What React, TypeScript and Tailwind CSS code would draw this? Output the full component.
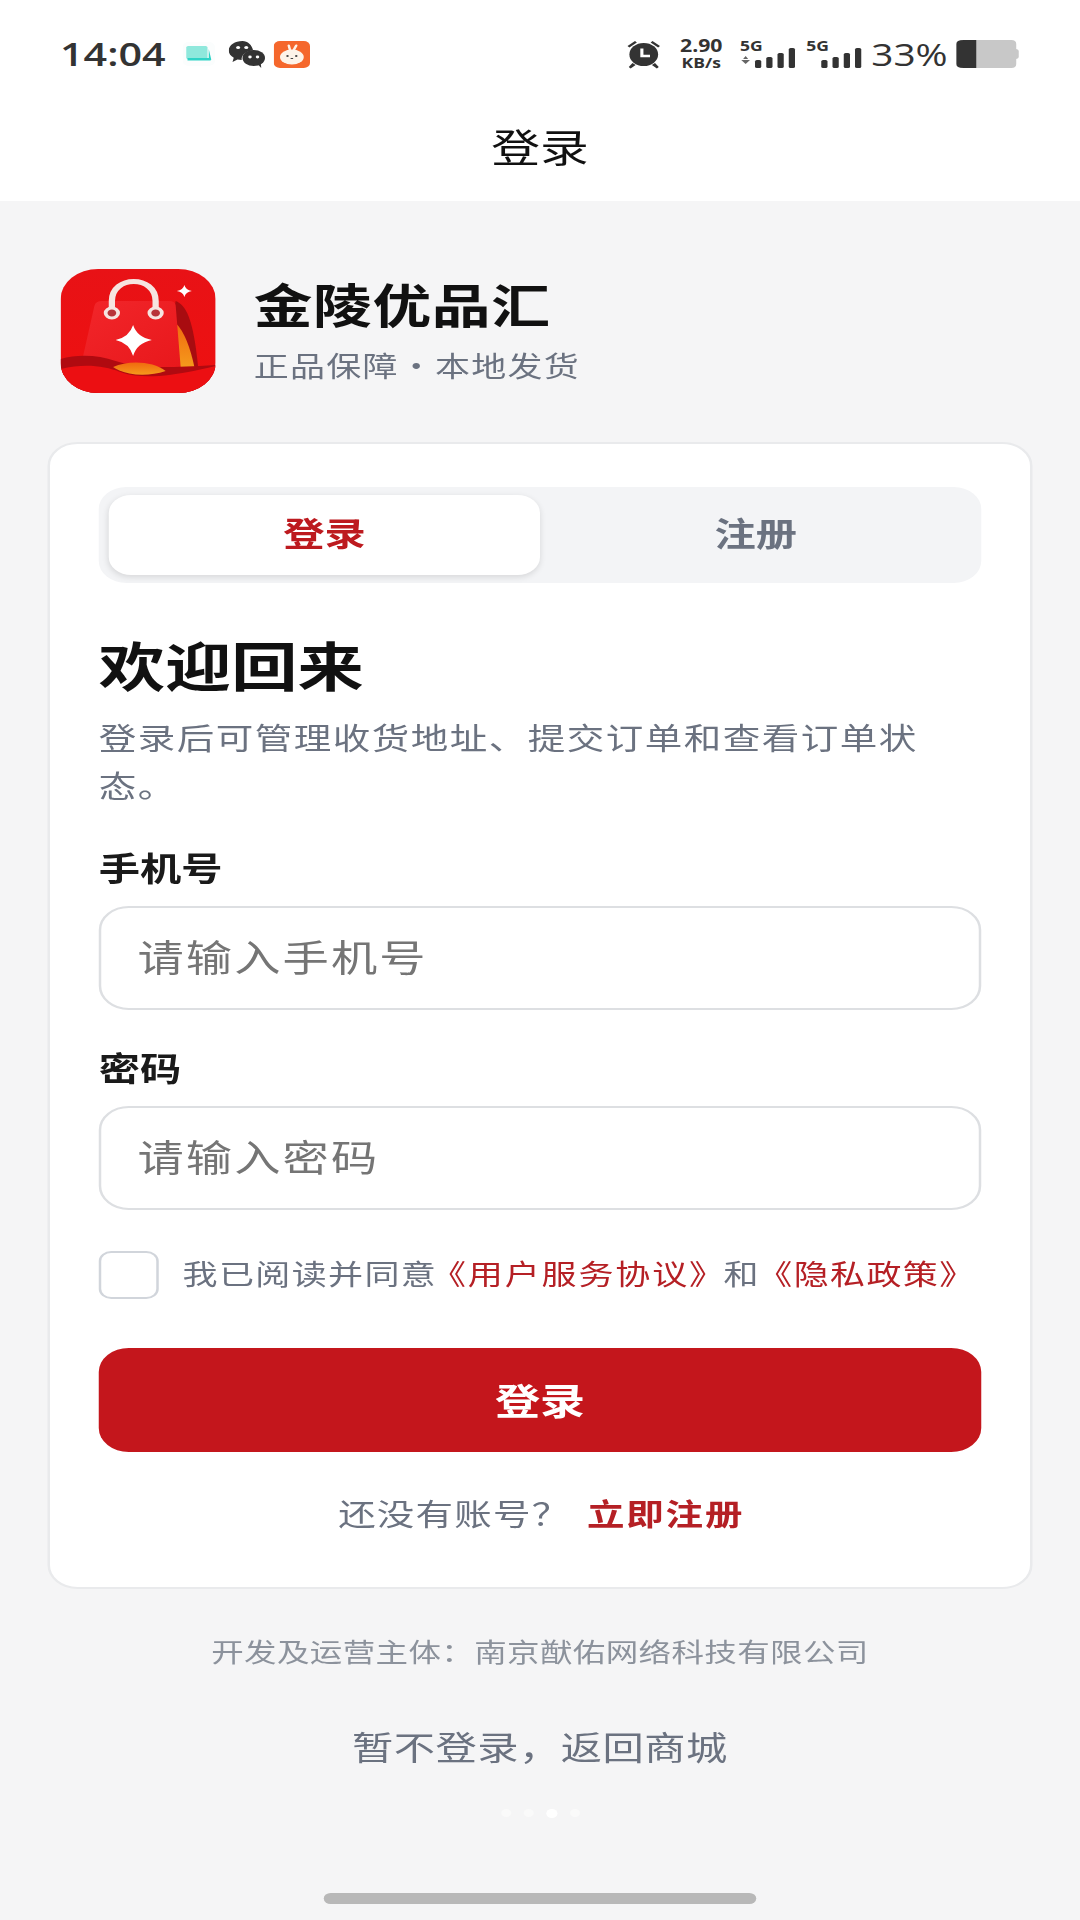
const cjk = "font-['Noto_Sans_CJK_SC','Noto_Sans',sans-serif]";

function Signal({ arrow }: { arrow?: boolean }) {
  return (
    <div className="relative w-[45px] h-[30px]">
      <span className="absolute left-0 top-[-1px] text-[14px] leading-[16px] font-bold text-[#333] font-['Open_Sans',sans-serif]">5G</span>
      <svg className="absolute left-0 top-0" width="45" height="30" viewBox="0 0 45 30" fill="#333">
        {arrow && <path d="M1 21h7l-3.500 4z M2.500 20l2-3 2 3z" opacity="0.75" />}
        <rect x="12" y="21" width="5" height="8" rx="1.500" />
        <rect x="21" y="18" width="5" height="11" rx="1.500" />
        <rect x="30" y="14" width="5" height="15" rx="1.500" />
        <rect x="39" y="9" width="5" height="20" rx="1.500" />
      </svg>
    </div>
  );
}

function Logo() {
  return (
    <svg width="125" height="124" viewBox="0 0 124 124" className="shrink-0">
      <defs>
        <clipPath id="lc"><rect width="124" height="124" rx="30" /></clipPath>
        <linearGradient id="bg" x1="0" y1="0" x2="0" y2="1">
          <stop offset="0" stopColor="#e81216" />
          <stop offset="1" stopColor="#ee1010" />
        </linearGradient>
        <linearGradient id="bag" x1="0" y1="0" x2="1" y2="1">
          <stop offset="0" stopColor="#f2262a" />
          <stop offset="1" stopColor="#e8181c" />
        </linearGradient>
        <linearGradient id="or" x1="0" y1="0" x2="0" y2="1">
          <stop offset="0" stopColor="#f0690f" />
          <stop offset="1" stopColor="#f59a1c" />
        </linearGradient>
      </defs>
      <g clipPath="url(#lc)">
        <rect width="124" height="124" fill="url(#bg)" />
        <path d="M92 32 C100 36 106 48 110 98 L84 98Z" fill="#a80c10" />
        <path d="M92 54 C99 62 104 80 107 98 L90 98Z" fill="url(#or)" />
        <path d="M33 32 L87 32 Q91 32 92 36 L96 98 L16 98 L27 37 Q28 32 33 32Z" fill="url(#bag)" />
        <path d="M0 90 C14 85 30 86 44 92 C58 98 74 100 124 96 L124 124 L0 124Z" fill="#b00a10" />
        <path d="M42 98 C54 91 74 92 84 102 C70 108 52 107 42 98Z" fill="url(#or)" />
        <path d="M0 100 C20 94 36 97 50 104 C66 110 88 108 124 97 L124 124 L0 124Z" fill="#ec0f12" />
        <path d="M41 44 L41 32 C41 6 76 6 76 32 L76 44" fill="none" stroke="#f6e4e0" strokeWidth="5" />
        <circle cx="41" cy="44" r="5" fill="#b8343a" stroke="#f6e4e0" strokeWidth="3" />
        <circle cx="76" cy="44" r="5" fill="#b8343a" stroke="#f6e4e0" strokeWidth="3" />
        <path d="M58 56 Q61 68 73 71 Q61 74 58 87 Q55 74 44 71 Q55 68 58 56Z" fill="#fff" />
        <path d="M99 16 Q100 21 105 22 Q100 23 99 28 Q98 23 93 22 Q98 21 99 16Z" fill="#fff" />
      </g>
    </svg>
  );
}

function StatusBar() {
  return (
    <div className="h-[88px] pt-[20px] px-[48px] flex items-center justify-between text-[#333]">
      <div className="flex items-center">
        <span className="text-[33px] leading-[40px] font-semibold font-['Open_Sans',sans-serif] w-[98px]">14:04</span>
        <svg width="26" height="26" viewBox="0 0 26 26">
          <rect x="0" y="1" width="26" height="24" rx="5" fill="#fbfdfd" />
          <rect x="3" y="5" width="17" height="13" rx="1.500" fill="#8fe8dc" />
          <path d="M4 17h17v-9l2 10.500q0 1-1 1H4Z" fill="#2fd3c6" />
        </svg>
        <svg width="29" height="27" viewBox="0 0 29 27" className="ml-[11px]" fill="#333">
          <path d="M11 0C5 0 0 4 0 9.500c0 3 1.600 5.600 4 7.300l-1 4.200 4-2.500c1 .3 2.200.5 3.300.5C10 13.500 14 10 19.500 9.500 18.600 4 15.200 0 11 0Z" />
          <ellipse cx="20" cy="17" rx="9" ry="8" />
          <path d="M23 23l3 4-.5-6Z" />
          <circle cx="7.500" cy="6.500" r="1.600" fill="#fff" />
          <circle cx="14" cy="6.500" r="1.600" fill="#fff" />
          <circle cx="17" cy="16" r="1.400" fill="#fff" />
          <circle cx="23" cy="16" r="1.400" fill="#fff" />
        </svg>
        <svg width="29" height="27" viewBox="0 0 29 27" className="ml-[7px]">
          <rect width="29" height="27" rx="5" fill="#f5672c" />
          <ellipse cx="14.500" cy="16" rx="9.500" ry="7.500" fill="#fdf3e8" />
          <path d="M13 9l-1-4.500M16 9l2-4.500" stroke="#fdf3e8" strokeWidth="2" strokeLinecap="round" />
          <circle cx="11" cy="15" r="1" fill="#444" />
          <circle cx="18" cy="15" r="1" fill="#444" />
          <path d="M13.500 17.500h2" stroke="#444" strokeWidth="1" />
        </svg>
      </div>
      <div className="flex items-center">
        <svg width="30" height="30" viewBox="0 0 30 30" fill="#333">
          <circle cx="15" cy="15.500" r="11.500" />
          <path d="M2 7l6-5 1.500 1.500-6 5ZM28 7l-6-5-1.500 1.500 6 5Z" />
          <path d="M6 24l-3 4 1.500 1.500 4-3.500ZM24 24l3 4-1.500 1.500-4-3.500Z" />
          <path d="M13.500 9.500v7.500h6.500" fill="none" stroke="#fff" strokeWidth="2.500" />
        </svg>
        <div className="ml-[12px] w-[38px] flex flex-col items-center gap-[1px] font-['Open_Sans',sans-serif] font-bold text-[#333]">
          <span className="text-[17px] leading-[16px]">2.90</span>
          <span className="text-[14px] leading-[15px]">KB/s</span>
        </div>
        <div className="ml-[12px]"><Signal arrow /></div>
        <div className="ml-[8px]"><Signal /></div>
        <span className="ml-[7px] w-[60px] text-[31px] leading-[40px] font-['Open_Sans',sans-serif]">33%</span>
        <svg width="51" height="28" viewBox="0 0 51 28" className="ml-[8px]">
          <path d="M6 0h38q4 0 4 4v5q2 .5 2 2v6q0 1.500-2 2v5q0 4-4 4H6q-6 0-6-4V4q0-4 6-4Z" fill="#c8c8c8" />
          <path d="M6 0h10v28H6q-6 0-6-4V4q0-4 6-4Z" fill="#333" />
        </svg>
      </div>
    </div>
  );
}

function Field({ label, placeholder, top }: { label: string; placeholder: string; top: string }) {
  return (
    <div className={top}>
      <div className="text-[33px] leading-[44px] font-bold text-[#1a1a1a]">{label}</div>
      <input
        readOnly
        placeholder={placeholder}
        className="mt-[17px] block w-full h-[104px] pl-[29px] pr-[32px] pb-[4px] rounded-[24px] border-2 border-[#dddfe2] bg-white text-[37px] tracking-[1.700px] outline-none placeholder:text-[#757575]"
      />
    </div>
  );
}

export default function App() {
  return (
    <div className="w-[1080px] h-[1920px] overflow-hidden bg-[#f5f5f6]">
      <div className={`w-[864px] h-[1920px] origin-top-left scale-x-125 flex flex-col ${cjk}`}>
        <header className="h-[201px] bg-white shrink-0">
          <StatusBar />
          <div className="h-[113px] pt-[2px] flex items-center justify-center text-[39px] text-[#111]">登录</div>
        </header>

        <div className="mt-[68px] px-[48px] flex items-center gap-[30px]">
          <Logo />
          <div className="mb-[4px]">
            <div className="text-[47px] leading-[60px] font-bold text-[#111] tracking-[0.5px]">金陵优品汇</div>
            <div className="mt-[12px] text-[28px] leading-[40px] text-[#6b7280] tracking-[1px] flex">
              <span>正品保障</span><span>·</span><span>本地发货</span>
            </div>
          </div>
        </div>

        <section className="mt-[49px] mx-[38px] h-[1147px] px-[39px] pt-[43px] rounded-[24px] border-2 border-[#e9eaec] bg-white">
          <div className="h-[96px] p-[8px] rounded-[22px] bg-[#f3f4f6] grid grid-cols-2">
            <div className="rounded-[18px] bg-white shadow-[0_2px_6px_rgba(0,0,0,0.12)] flex items-center justify-center pb-[4px] text-[33px] font-bold text-[#bd1a1f]">登录</div>
            <div className="flex items-center justify-center pb-[4px] text-[33px] font-bold text-[#6b7280]">注册</div>
          </div>

          <h1 className="mt-[45px] text-[53px] leading-[72px] font-bold text-[#111]">欢迎回来</h1>
          <p className="mt-[12px] text-[30px] leading-[48px] text-[#6b7280] tracking-[1.200px]">登录后可管理收货地址、提交订单和查看订单状态。</p>

          <Field top="mt-[37px]" label="手机号" placeholder="请输入手机号" />
          <Field top="mt-[35px]" label="密码" placeholder="请输入密码" />

          <div className="mt-[41px] flex items-center">
            <div className="w-[48px] h-[48px] rounded-[10px] border-2 border-[#d1d5db] bg-white shrink-0" />
            <p className="ml-[19px] pb-[4px] text-[28px] leading-[40px] whitespace-nowrap text-[#6b7280] tracking-[1.100px]">
              我已阅读并同意<span className="ml-[-5px] tracking-[1.500px] text-[#b52025]">《用户服务协议》</span><span className="ml-[-2px]">和</span><span className="ml-[-2px] text-[#b52025]">《隐私政策》</span>
            </p>
          </div>

          <button className="mt-[49px] w-full h-[104px] pb-[2px] rounded-[24px] bg-[#c4161c] text-white text-[36px] font-bold">登录</button>

          <div className="mt-[38px] h-[44px] pl-[2px] flex items-center justify-center text-[30px] leading-[44px]">
            <span className="text-[#6b7280] tracking-[1px]">还没有账号？</span>
            <span className="ml-[13px] font-bold text-[#b52025] tracking-[1.500px]">立即注册</span>
          </div>
        </section>

        <div className="mt-[42px] text-center text-[26px] leading-[40px] text-[#8c929c] tracking-[0.3px]">开发及运营主体：南京猷佑网络科技有限公司</div>
        <div className="mt-[51px] text-center text-[33px] leading-[48px] text-[#6b7280] tracking-[0.4px]">暂不登录，返回商城</div>

        <div className="mt-[38px] h-[10px] flex items-center justify-center gap-[10px]">
          <span className="w-[8px] h-[8px] rounded-full bg-[#fafafa]" />
          <span className="w-[8px] h-[8px] rounded-full bg-[#fafafa]" />
          <span className="w-[9px] h-[9px] rounded-full bg-white" />
          <span className="w-[8px] h-[8px] rounded-full bg-[#fafafa]" />
        </div>

        <div className="mt-[75px] mx-auto w-[346px] h-[11px] rounded-full bg-[#b8b8b8]" />
      </div>
    </div>
  );
}
